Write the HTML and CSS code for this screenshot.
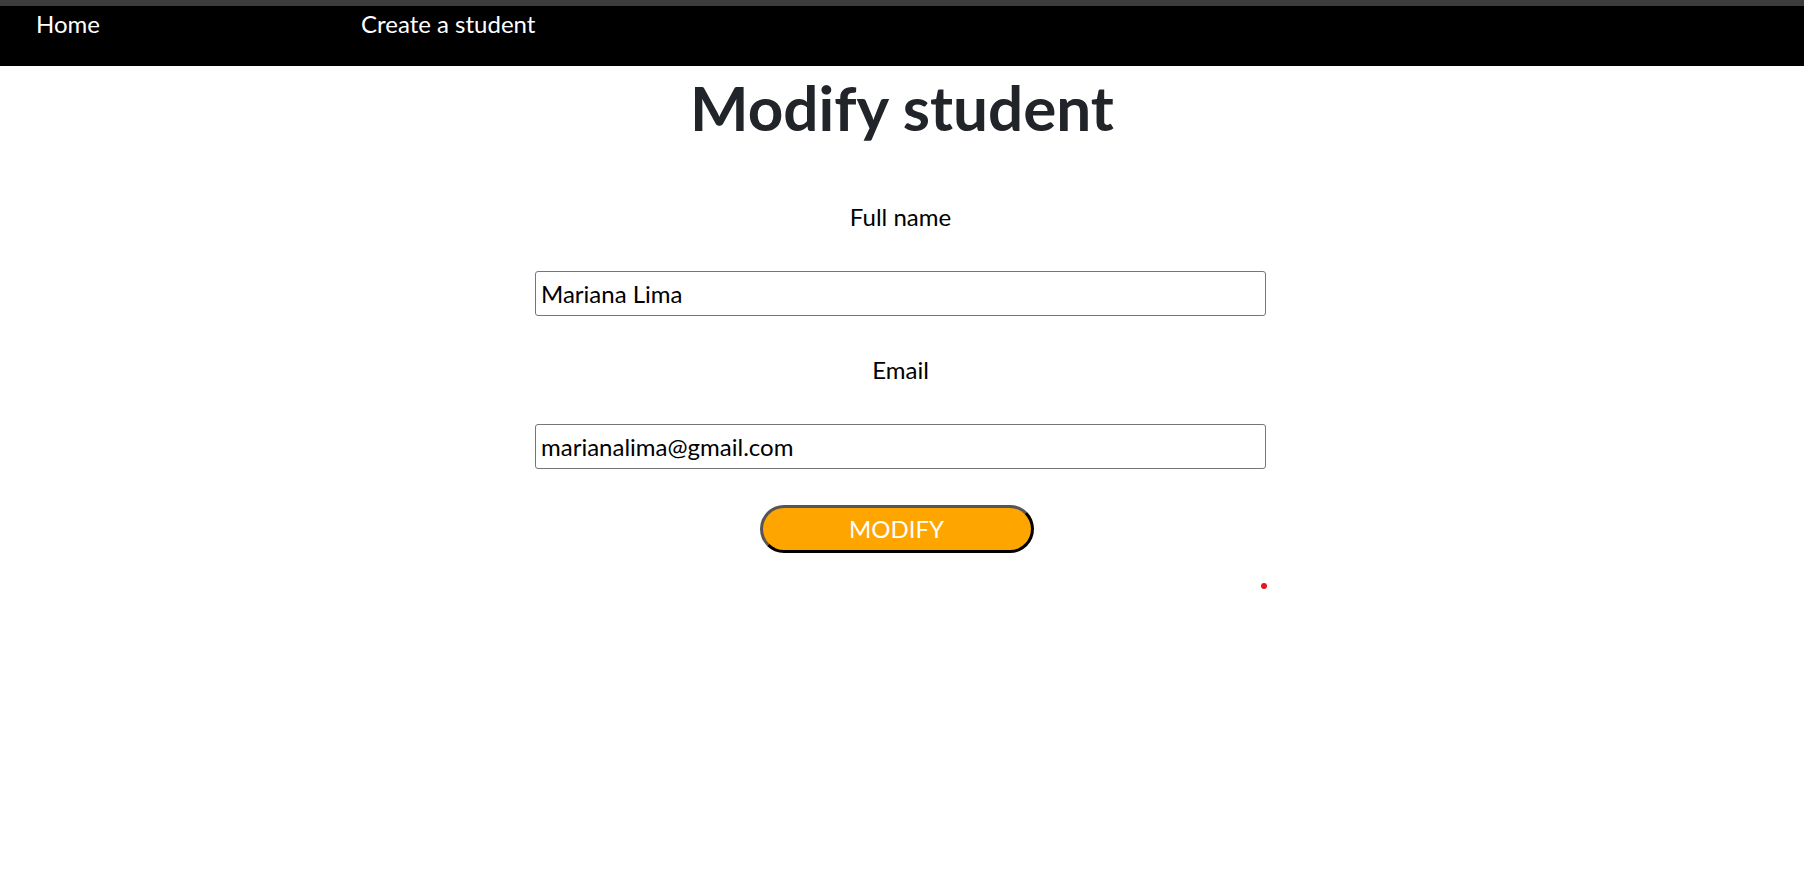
FILE: index.html
```html
<!DOCTYPE html>
<html lang="en">
<head>
<meta charset="utf-8">
<title>Modify student</title>
<link rel="stylesheet" href="styles.css">
</head>
<body>
<div class="strip"></div>
<nav class="nav">
  <a class="nav-link nav-home" href="#">Home</a>
  <a class="nav-link" href="#">Create a student</a>
</nav>
<main class="main">
  <h1 class="title">Modify student</h1>
  <form class="form">
    <label class="label" for="name">Full name</label>
    <input class="field" id="name" type="text" value="Mariana Lima">
    <label class="label" for="email">Email</label>
    <input class="field" id="email" type="email" value="marianalima@gmail.com">
    <button class="btn" type="button">MODIFY</button>
    <span class="dot"></span>
  </form>
</main>
</body>
</html>
```
FILE: styles.css
```css
html, body {
  margin: 0;
  padding: 0;
  background: #fff;
}
body {
  font-family: Lato, "Open Sans", sans-serif;
}
.strip {
  height: 6px;
  background: #3c3c3c;
}
.nav {
  height: 60px;
  background: #000;
  display: flex;
  align-items: flex-start;
  padding: 4px 0 0 36px;
  box-sizing: border-box;
}
.nav-link {
  color: #fff;
  text-decoration: none;
  font-size: 24px;
  line-height: 1.2;
}
.nav-home {
  width: 325px;
}
.main {
  display: flex;
  flex-direction: column;
  align-items: center;
}
.title {
  margin: 4px 0 0;
  font-size: 62px;
  line-height: 1.2;
  font-weight: 700;
  color: #212529;
}
.form {
  width: 731px;
  margin-right: 3px;
  display: flex;
  flex-direction: column;
  align-items: stretch;
  margin-top: 59px;
}
.label {
  text-align: center;
  font-size: 24px;
  line-height: 1.2;
  color: #000;
}
.field {
  margin: 39px 0 40px;
  height: 45px;
  box-sizing: border-box;
  border: 1px solid #767676;
  border-radius: 3px;
  padding: 0 5px;
  font-family: Lato, "Open Sans", sans-serif;
  font-size: 24px;
  color: #000;
  background: #fff;
}
.form .field:last-of-type {
  margin-bottom: 36px;
}
.btn {
  align-self: center;
  margin-right: 8px;
  width: 274px;
  height: 48px;
  border-style: solid;
  border-width: 3px;
  border-color: #555 #000 #000 #555;
  border-radius: 24px;
  background: #ffa500;
  color: #fff;
  font-family: Lato, "Open Sans", sans-serif;
  font-size: 24px;
  padding: 0;
}
.dot {
  align-self: flex-end;
  width: 6px;
  height: 6px;
  margin: 30px -1px 0 0;
  border-radius: 50%;
  background: #e8141b;
}
```
